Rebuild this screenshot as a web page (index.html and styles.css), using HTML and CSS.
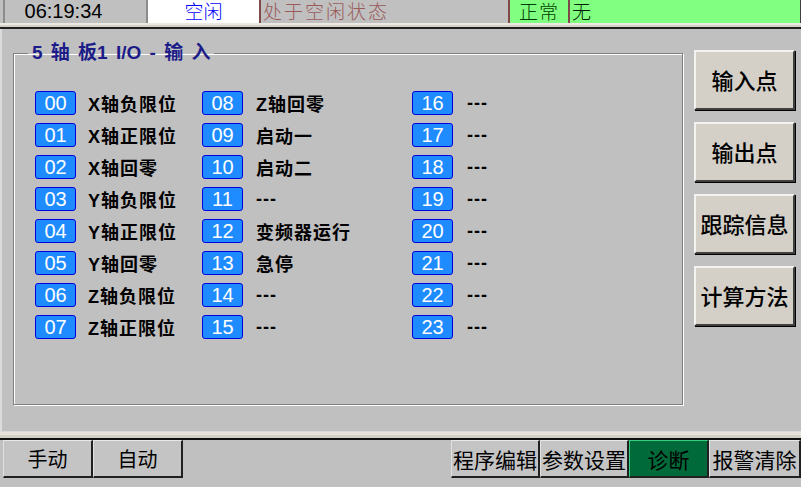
FILE: index.html
```html
<!DOCTYPE html>
<html>
<head>
<meta charset="utf-8">
<link rel="stylesheet" href="styles.css">
</head>
<body>
<div class="screen">
  <div class="topbar">
    <div class="cell edge"></div>
    <div class="cell time">06:19:34</div>
    <div class="cell state"><span class="tx">空闲</span></div>
    <div class="cell msg"><span class="tx">处于空闲状态</span></div>
    <div class="cell ok"><span class="tx">正常</span></div>
    <div class="cell alarm"><span class="tx">无</span></div>
  </div>
  <div class="hbar"></div>
  <div class="main">
    <fieldset class="group">
      <legend>5 轴 板1 I/O - 输 入</legend>
      <div class="grid">
        <div class="io c1"><span class="badge">00</span><span class="lbl">X轴负限位</span></div>
        <div class="io c2"><span class="badge">08</span><span class="lbl">Z轴回零</span></div>
        <div class="io c3"><span class="badge">16</span><span class="lbl">---</span></div>
        <div class="io c1"><span class="badge">01</span><span class="lbl">X轴正限位</span></div>
        <div class="io c2"><span class="badge">09</span><span class="lbl">启动一</span></div>
        <div class="io c3"><span class="badge">17</span><span class="lbl">---</span></div>
        <div class="io c1"><span class="badge">02</span><span class="lbl">X轴回零</span></div>
        <div class="io c2"><span class="badge">10</span><span class="lbl">启动二</span></div>
        <div class="io c3"><span class="badge">18</span><span class="lbl">---</span></div>
        <div class="io c1"><span class="badge">03</span><span class="lbl">Y轴负限位</span></div>
        <div class="io c2"><span class="badge">11</span><span class="lbl">---</span></div>
        <div class="io c3"><span class="badge">19</span><span class="lbl">---</span></div>
        <div class="io c1"><span class="badge">04</span><span class="lbl">Y轴正限位</span></div>
        <div class="io c2"><span class="badge">12</span><span class="lbl">变频器运行</span></div>
        <div class="io c3"><span class="badge">20</span><span class="lbl">---</span></div>
        <div class="io c1"><span class="badge">05</span><span class="lbl">Y轴回零</span></div>
        <div class="io c2"><span class="badge">13</span><span class="lbl">急停</span></div>
        <div class="io c3"><span class="badge">21</span><span class="lbl">---</span></div>
        <div class="io c1"><span class="badge">06</span><span class="lbl">Z轴负限位</span></div>
        <div class="io c2"><span class="badge">14</span><span class="lbl">---</span></div>
        <div class="io c3"><span class="badge">22</span><span class="lbl">---</span></div>
        <div class="io c1"><span class="badge">07</span><span class="lbl">Z轴正限位</span></div>
        <div class="io c2"><span class="badge">15</span><span class="lbl">---</span></div>
        <div class="io c3"><span class="badge">23</span><span class="lbl">---</span></div>
      </div>
    </fieldset>
    <div class="side">
      <div class="sbtn">输入点</div>
      <div class="sbtn">输出点</div>
      <div class="sbtn">跟踪信息</div>
      <div class="sbtn">计算方法</div>
    </div>
  </div>
  <div class="hbar low"></div>
  <div class="bottombar">
    <div class="bbtn">手动</div>
    <div class="bbtn">自动</div>
    <div class="spacer"></div>
    <div class="bbtn r">程序编辑</div>
    <div class="bbtn r">参数设置</div>
    <div class="bbtn r active">诊断</div>
    <div class="bbtn r last">报警清除</div>
  </div>
</div>
</body>
</html>
```
FILE: styles.css
```css
* { box-sizing: border-box; }
html, body { margin: 0; padding: 0; }
body {
  width: 801px;
  height: 487px;
  overflow: hidden;
  background: #c0c0c0;
  font-family: "Liberation Sans", "Noto Sans CJK SC", sans-serif;
}
.screen {
  width: 801px;
  height: 487px;
  display: flex;
  flex-direction: column;
  background: #c0c0c0;
}
.topbar {
  height: 23px;
  display: flex;
  border-right: 1px solid #404040;
  position: relative;
  z-index: 1;
}
.cell {
  height: 23px;
  line-height: 23px;
  font-size: 18px;
  white-space: nowrap;
}
.tx {
  display: inline-block;
  height: 23px;
  line-height: 21px;
  vertical-align: top;
}
.edge { width: 5px; border-right: 2px solid #8c8c8c; }
.time {
  width: 143px;
  text-align: center;
  color: #000;
  font-size: 20px;
  border-right: 2px solid #8c8c8c;
  padding-right: 24px;
}
.state {
  width: 111px;
  background: #fff;
  color: #0000ff;
  text-align: center;
  font-family: "Noto Sans CJK SC", sans-serif;
  font-weight: 300;
  font-size: 19px;
}
.msg {
  width: 249px;
  border-left: 2px solid #804848;
  color: #9a5a5a;
  padding-left: 2px;
  font-family: "Noto Sans CJK SC", sans-serif;
  font-weight: 300;
  font-size: 19px;
  letter-spacing: 2px;
}
.ok {
  width: 62px;
  background: #80ff80;
  border-left: 2px solid #804848;
  border-right: 2px solid #804848;
  text-align: center;
  color: #004000;
  font-family: "Noto Sans CJK SC", sans-serif;
  font-weight: 300;
  font-size: 19px;
  letter-spacing: 1px;
}
.alarm {
  flex: 1;
  background: #80ff80;
  color: #002000;
  padding-left: 2px;
  font-family: "Noto Sans CJK SC", sans-serif;
  font-weight: 300;
  font-size: 19px;
}
.hbar {
  height: 6px;
  background: #d4d0c8;
  border-top: 2px solid #ece9e2;
  border-bottom: 2px solid #202020;
}
.hbar.low { height: 8px; border-top: 3px solid #e6e2da; border-bottom: 2px solid #101010; }
.main {
  height: 403px;
  display: flex;
  align-items: flex-start;
  padding: 13px 0 0 13px;
  border-left: 2px solid #dcdcdc;
  border-bottom: 1px solid #d8d8d8;
}
.group {
  margin: 0;
  width: 670px;
  height: 363px;
  margin-left: -2px;
  border: 1px solid #808080;
  box-shadow: 1px 1px 0 #ffffff, inset 1px 1px 0 #ffffff;
  padding: 27px 0 0 21px;
}
.group legend {
  padding: 0 4px;
  margin-left: -7px;
  font-size: 19px;
  font-weight: bold;
  color: #1c1c88;
  line-height: 22px;
  font-family: "Liberation Sans", "Noto Sans CJK SC", sans-serif;
  word-spacing: 3px;
}
.grid {
  display: grid;
  grid-template-columns: 167px 210px auto;
  row-gap: 8px;
}
.io {
  display: flex;
  align-items: center;
  height: 24px;
}
.badge {
  width: 41px;
  height: 24px;
  background: #1e8cff;
  border: 1px solid #0000e0;
  border-radius: 3px;
  color: #fff;
  font-size: 20px;
  line-height: 22px;
  text-align: center;
}
.lbl {
  margin-left: 12px;
  font-size: 18px;
  font-weight: bold;
  letter-spacing: 1px;
  color: #000;
  font-family: "Liberation Sans", "Noto Sans CJK SC", sans-serif;
  white-space: nowrap;
}
.c2 .lbl { margin-left: 13px; }
.c3 .lbl { margin-left: 14px; }
.side {
  margin-left: 11px;
  padding-top: 8px;
  display: flex;
  flex-direction: column;
  gap: 12px;
}
.sbtn {
  width: 101px;
  height: 60px;
  background: #d4d0c8;
  border-top: 2px solid #f4f2ee;
  border-left: 2px solid #f4f2ee;
  border-right: 2px solid #404040;
  border-bottom: 2px solid #404040;
  box-shadow: 1px 1px 0 #000;
  display: flex;
  align-items: center;
  justify-content: center;
  padding-bottom: 3px;
  font-family: "Noto Sans CJK SC", sans-serif;
  font-size: 22px;
  font-weight: 500;
  color: #000;
  white-space: nowrap;
}
.bottombar {
  height: 38px;
  display: flex;
  padding-left: 3px;
}
.spacer { flex: 1; }
.bbtn {
  height: 38px;
  width: 90px;
  background: #c4c4c4;
  border-top: 1px solid #e8e8e8;
  border-left: 1px solid #e0e0e0;
  border-right: 2px solid #202020;
  border-bottom: 2px solid #202020;
  display: flex;
  align-items: center;
  justify-content: center;
  font-family: "Noto Sans CJK SC", sans-serif;
  font-size: 20px;
  color: #000;
  white-space: nowrap;
}
.bbtn.r { width: 89px; font-size: 21px; }
.bbtn.active {
  width: 80px;
  background: #006a3a;
  border-top: 1px solid #30d080;
  border-left: 1px solid #30d080;
}
.bbtn.last { width: 92px; }
```
